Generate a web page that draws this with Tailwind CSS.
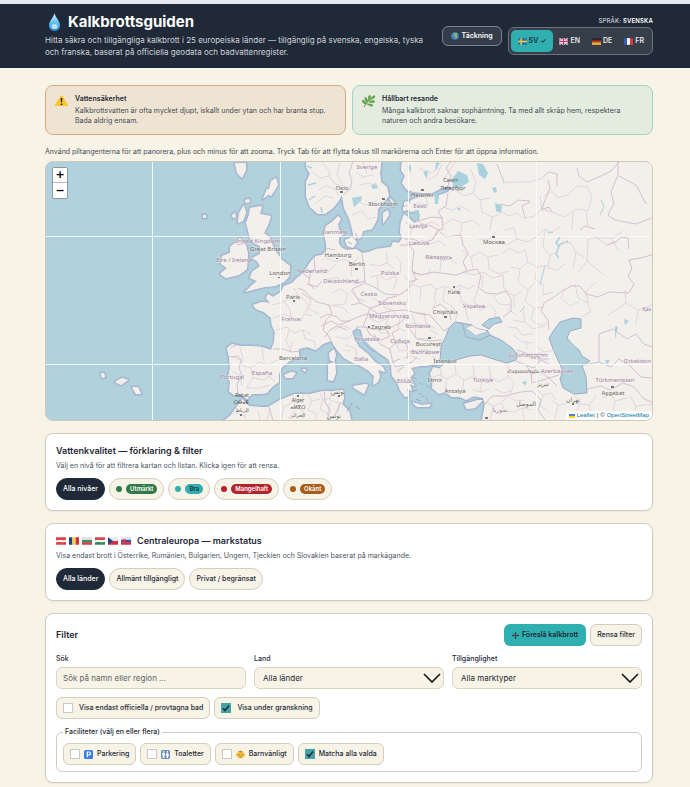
<!DOCTYPE html>
<html lang="sv">
<head>
    <meta charset="UTF-8">
    <meta name="viewport" content="width=device-width, initial-scale=1.0">
    <title>Kalkbrottsguiden</title>
    <script src="https://cdn.jsdelivr.net/npm/@tailwindcss/browser@4"></script>
</head>
<body class="bg-[#f7f3e6] font-['Inter','Noto_Sans',sans-serif] text-[7px] leading-[10px] text-[#1f2937]">

<!-- Shared icons -->
<svg class="hidden" aria-hidden="true">
    <defs>
        <clipPath id="wave"><path d="M0 1.5Q3 0 6 1T12 1V8Q9 9 6 8T0 8.5Z"/></clipPath>
        <symbol id="se" viewBox="0 0 12 9"><g clip-path="url(#wave)"><path fill="#2e73a8" d="M0 0h12v9H0z"/><path fill="#f7cf3c" d="M3.3 0h1.8v9H3.3zM0 3.6h12v1.8H0z"/></g></symbol>
        <symbol id="gb" viewBox="0 0 12 9"><g clip-path="url(#wave)"><path fill="#34488e" d="M0 0h12v9H0z"/><path stroke="#fff" stroke-width="2" d="M0 0l12 9M12 0L0 9"/><path stroke="#d8304a" stroke-width=".8" d="M0 0l12 9M12 0L0 9"/><path fill="#fff" d="M4.5 0h3v9h-3zM0 3h12v3H0z"/><path fill="#d8304a" d="M5.2 0h1.6v9H5.2zM0 3.7h12v1.6H0z"/></g></symbol>
        <symbol id="de" viewBox="0 0 12 9"><g clip-path="url(#wave)"><path fill="#27272a" d="M0 0h12v3.5H0z"/><path fill="#d5302c" d="M0 3.3h12v2.6H0z"/><path fill="#f5b52c" d="M0 5.8h12V9H0z"/></g></symbol>
        <symbol id="fr" viewBox="0 0 12 9"><g clip-path="url(#wave)"><path fill="#2f5fae" d="M0 0h4v9H0z"/><path fill="#f5f5f5" d="M4 0h4v9H4z"/><path fill="#d93640" d="M8 0h4v9H8z"/></g></symbol>
        <symbol id="at" viewBox="0 0 12 9"><g clip-path="url(#wave)"><path fill="#dc4048" d="M0 0h12v9H0z"/><path fill="#fff" d="M0 3.8Q3 2.800 6 3.400T12 3v2.500Q9 6.300 6 5.700T0 6.200z"/></g></symbol>
        <symbol id="ro" viewBox="0 0 12 9"><g clip-path="url(#wave)"><path fill="#24408e" d="M0 0h4v9H0z"/><path fill="#f7cf3c" d="M4 0h4v9H4z"/><path fill="#d0303a" d="M8 0h4v9H8z"/></g></symbol>
        <symbol id="bg" viewBox="0 0 12 9"><g clip-path="url(#wave)"><path fill="#dedede" d="M0 0h12v3.5H0z"/><path fill="#3d8b67" d="M0 3.3h12v2.6H0z"/><path fill="#cc4545" d="M0 5.8h12V9H0z"/></g></symbol>
        <symbol id="hu" viewBox="0 0 12 9"><g clip-path="url(#wave)"><path fill="#d44450" d="M0 0h12v4H0z"/><path fill="#348a5c" d="M0 5h12v4H0z"/><path fill="#fff" d="M0 3.800Q3 2.800 6 3.400T12 3v2.500Q9 6.300 6 5.700T0 6.200z"/></g></symbol>
        <symbol id="cz" viewBox="0 0 12 9"><g clip-path="url(#wave)"><path fill="#e6e6ec" d="M0 0h12v4.5H0z"/><path fill="#cf3340" d="M0 4.5h12V9H0z"/><path fill="#28457f" d="M0 0l6 4.5L0 9z"/></g></symbol>
        <symbol id="sk" viewBox="0 0 12 9"><g clip-path="url(#wave)"><path fill="#e0e0ea" d="M0 0h12v3.5H0z"/><path fill="#2f4fb0" d="M0 3.1h12v2.8H0z"/><path fill="#cf3348" d="M0 5.8h12V9H0z"/><path fill="#d33852" d="M2 2.5h3.6v3L3.8 7.2 2 5.5z"/></g></symbol>
        <symbol id="chev" viewBox="0 0 18 10"><path d="M1 1l8 8 8-8" fill="none" stroke="#1b1b1b" stroke-width="1.7"/></symbol>
        <symbol id="tick" viewBox="0 0 10 10"><path d="M2 5.3l2 2.2L8 2.4" fill="none" stroke="#17303a" stroke-width="1.6"/></symbol>
    </defs>
</svg>

<header class="border-t-4 border-[#e9e7f1] bg-[#1f2937] text-white">
    <div class="flex items-start justify-between gap-3 pt-[9px] pr-[37px] pb-[10px] pl-[45px]">
        <div class="flex-1">
            <h1 class="flex items-center gap-[5px] text-[15px] leading-[18px] font-bold">
                <svg class="h-[18px] w-[18px]" viewBox="0 0 18 18" aria-hidden="true">
                    <defs><linearGradient id="dropFill" x2="0" y2="1"><stop offset="0" stop-color="#d5f1ff"/><stop offset=".6" stop-color="#5bb9f0"/><stop offset="1" stop-color="#2389dc"/></linearGradient></defs>
                    <path fill="url(#dropFill)" d="M9.500 0C9 4 4 8 4 12.500a5.500 5.500 0 0 0 11 0C15 8 10 4 9.500 0z"/>
                    <ellipse cx="9.500" cy="13.500" rx="3" ry="2.500" fill="#b5e5fd"/>
                </svg>
                Kalkbrottsguiden
            </h1>
            <p class="mt-[3px] text-[8px] leading-3 text-[#d0d4da]">Hitta säkra och tillgängliga kalkbrott i 25 europeiska länder — tillgänglig på svenska, engelska, tyska och franska, baserat på officiella geodata och badvattenregister.</p>
        </div>
        <div class="flex items-start gap-[6px] pt-1">
            <button class="mt-[9px] flex h-5 items-center gap-[2px] rounded-md border border-[#7b828c] bg-[#343d49] px-2 font-semibold">
                <svg class="h-2 w-2" viewBox="0 0 10 10" aria-hidden="true"><circle cx="5" cy="5" r="4.800" fill="#4278dc"/><path fill="#80b957" d="M3.500 1L7 .8l1.500 2L7 4l1.500 1.500L7 8.500 5.500 9 5 6 3 5zM.5 4L2 5 1.500 7z"/></svg>
                Täckning
            </button>
            <div>
                <p class="text-right text-[6px] leading-[8px] font-medium tracking-wide text-[#d0d4da]">SPRÅK: <b class="font-semibold text-white">SVENSKA</b></p>
                <div class="mt-[2px] flex h-7 items-center rounded-md border border-[#6b727c] bg-[#353e49] p-[2px] font-semibold text-[#e4e7ea]">
                    <button class="flex h-[22px] items-center gap-[2px] rounded-[5px] bg-[#2fafb0] px-[7px] text-[#17303a]"><svg class="h-[7px] w-[9px]"><use href="#se"/></svg>SV <span>✓</span></button>
                    <button class="flex h-[22px] items-center gap-[2px] px-[6px]"><svg class="h-[7px] w-[9px]"><use href="#gb"/></svg>EN</button>
                    <button class="flex h-[22px] items-center gap-[2px] px-[6px]"><svg class="h-[7px] w-[9px]"><use href="#de"/></svg>DE</button>
                    <button class="flex h-[22px] items-center gap-[2px] px-[6px]"><svg class="h-[7px] w-[9px]"><use href="#fr"/></svg>FR</button>
                </div>
            </div>
        </div>
    </div>
</header>

<main class="pt-[17px] pr-[37px] pb-1 pl-[45px]">
    <!-- Safety notices -->
    <section class="grid grid-cols-2 gap-[6px]">
        <div class="flex gap-[6px] rounded-lg border border-[#cfad88] bg-[#efe3d2] p-2">
            <svg class="h-[15px] w-[15px] shrink-0" viewBox="0 0 15 15" aria-hidden="true"><path fill="#fbc62f" stroke="#fbc62f" stroke-linejoin="round" d="M7.500 1.500l6.500 10H1z"/><path fill="#222" d="M6.600 4h1.800L8 8.500H7z"/><circle cx="7.500" cy="10.300" r=".9" fill="#222"/></svg>
            <div>
                <h2 class="font-semibold">Vattensäkerhet</h2>
                <p class="mt-[2px] text-[#434b55]">Kalkbrottsvatten är ofta mycket djupt, iskallt under ytan och har branta stup. Bada aldrig ensam.</p>
            </div>
        </div>
        <div class="flex gap-[6px] rounded-lg border border-[#a6d3c5] bg-[#e4ebdf] p-2">
            <svg class="h-[15px] w-[15px] shrink-0" viewBox="0 0 15 15" aria-hidden="true"><path d="M3 13Q6 7 12 3M5 10L2 7M7 8L5 4M8 7L8 2M6 10l5 1M8 8l5 0" fill="none" stroke="#568e3f"/><g fill="#69a650"><ellipse cx="3" cy="8" rx="1.400" ry="2.600" transform="rotate(-45 3 8)"/><ellipse cx="5" cy="5.500" rx="1.300" ry="2.600" transform="rotate(-20 5 5.500)"/><ellipse cx="8.500" cy="3.500" rx="1.300" ry="2.600" transform="rotate(10 8.500 3.500)"/><ellipse cx="12" cy="3.500" rx="1.300" ry="2.800" transform="rotate(50 12 3.500)"/><ellipse cx="11.500" cy="7.500" rx="2.700" ry="1.300"/><ellipse cx="9.500" cy="11" rx="2.700" ry="1.300" transform="rotate(15 9.500 11)"/></g></svg>
            <div>
                <h2 class="font-semibold">Hållbart resande</h2>
                <p class="mt-[2px] text-[#434b55]">Många kalkbrott saknar sophämtning. Ta med allt skräp hem, respektera naturen och andra besökare.</p>
            </div>
        </div>
    </section>

    <!-- Map -->
    <p class="mt-3 text-[#434b55]">Använd piltangenterna för att panorera, plus och minus för att zooma. Tryck Tab för att flytta fokus till markörerna och Enter för att öppna information.</p>
    <section class="relative mt-1 h-[260px] overflow-hidden rounded-lg border border-[#cdc9bb] bg-[#b1d1dd]">
        <svg class="h-full w-full" viewBox="46 162 606 258" preserveAspectRatio="xMidYMid slice" role="img" aria-label="Karta över Europa">
            <defs>
                <g id="land" stroke-linejoin="round">
                    <!-- continent -->
                    <path d="M403 155L401 170 405 176 402 183 407 190 414 192 422 193 432 193 440 189 447 186 452 187 448 192 440 195 430 196 420 197 411 200 408 206 410 212 416 211 420 214 419 221 414 223 409 218 404 214 401 222 400 232 402 238 399 243 393 242 391 247 383 248 376 249 369 252 362 253 356 249 347 250 342 248 339 244 339 237 344 234 339 230 338 224 341 219 338 216 332 222 326 226 324 234 326 243 326 251 322 255 316 256 311 261 307 267 303 273 297 278 292 283 284 286 281 292 273 297 268 294 266 298 270 303 262 302 253 305 256 309 264 312 271 318 272 326 275 332 274 342 271 350 262 347 250 346 240 346 232 344 227 348 229 357 230 368 228 378 230 382 229 391 234 395 240 394 247 399 252 394 260 394 267 393 272 387 279 382 279 374 282 367 290 361 299 357 299 349 307 347 316 350 323 344 331 341 337 350 344 358 353 363 361 366 369 371 374 376 373 385 378 382 380 376 378 370 385 372 383 367 375 362 368 354 359 347 354 338 352 331 357 328 361 330 363 338 370 346 379 353 388 359 391 366 392 376 397 382 400 390 405 397 409 396 407 389 412 391 410 384 415 386 410 378 414 373 411 368 420 366 427 366 436 363 433 368 430 374 433 380 432 388 439 394 445 392 452 397 460 397 466 400 474 396 483 398 485 404 482 421H660V155Z"/>
                    <!-- Scandinavia -->
                    <path d="M307 155L306 167 310 174 306 182 306 196 310 207 318 214 325 214 333 208 338 202 342 195 344 208 349 218 352 229 354 239 361 238 363 231 372 229 377 220 378 209 384 202 389 196 387 187 381 182 380 173 382 155Z"/>
                    <!-- British Isles -->
                    <path d="M250 208L262 206 260 214 271 216 268 225 264 233 270 238 274 249 282 260 290 266 289 277 284 282 275 286 265 287 256 289 245 292 252 285 257 281 250 278 252 272 260 266 257 261 252 258 260 254 260 246 254 243 250 239 248 230 246 223 249 215Z"/>
                    <path d="M240 238L246 245 248 254 247 269 239 275 226 278 220 274 227 268 221 264 222 256 230 253 230 247 236 242Z"/>
                    <path d="M244 205l-5 8-1 10 5-2 3-8zM271 181l5-3 2 7-7 11-3-2zM235 163l11 0 0 7-4 8-5-5zM245 200l4-1 1 3-4 1zM267 189l3 0-2 6-5 4zM232 215l3-2 1 4-3 1z"/>
                    <!-- islands -->
                    <path d="M329 353l5-4 2 6-2 7-4-2zM328 364l7-2 1 11-3 8-5-1zM353 386l13-2 2 1-4 9-10-6zM284 375l7-3 5 1-4 5-6 0zM302 369l4 0-1 3zM412 402l10 3 9-1-2 3-12 0zM464 404l14-4 5 0-8 8-8 1zM345 240l7-3 5 5-4 6-6-2zM383 213l5-3 1 5-6 9zM389 197l5 5-1 5zM404 202l5-1 0 4-5 1zM403 207l5-1 0 4-5 1z"/>
                    <!-- Africa -->
                    <path d="M218 425L230 416 238 405 242 399 249 406 260 407 268 407 280 400 295 394 310 394 323 391 333 391 343 390 344 398 342 404 349 411 352 425Z"/>
                    <path d="M101 373l3 0 1 4-3 1zM115 382l7-4 6 2-7 5zM132 387l6 0 3 7-5 0zM203 215l3 0 0 3-3 0z"/>
                </g>
                <g id="seas" stroke-linejoin="round">
                    <path d="M440 361L441 347 446 336 449 328 455 322 462 323 464 329 467 335 476 336 484 333 490 335 501 340 512 348 517 354 516 360 507 363 493 359 481 355 470 356 459 359 449 363Z"/>
                    <path d="M482 325L489 319 499 317 502 322 494 324 489 329Z"/>
                    <path d="M462 323L472 325 468 328 474 333 479 334 487 330 490 335 480 340 466 337Z"/>
                    <path d="M560 322L573 318 581 319 581 328 570 331 567 338 573 345 579 350 582 356 590 361 582 366 586 376 587 393 574 394 563 388 560 379 563 371 558 360 553 349 549 338 554 330Z"/>
                    <path d="M432 366l12-2-5 4z"/>
                </g>
                <path id="lakes" d="M452 179l6-8 9 4 2 7-8 5-8 1zM477 163l6 1 5 9-3 6-6-4zM415 210h4v8h-4zM434 192l5 3-1 9-3 0zM352 198l10-2-1 5-7 6zM371 185l5-2 2 5-5 1zM457 208l4 0-2 3zM492 188l4-1 1 5-3 1zM495 203l7 3-1 7-5-2zM624 319l5 2-4 4zM615 327l3-1-3 14zM436 162l4 1-5 8zM423 172l5-2-1 9zM407 166l4-1 0 8zM522 382l5-1-2 5zM605 360l5 0-3 5z"/>
            </defs>

            <use href="#land" fill="#f3f0ec" stroke="#9aa9cb" stroke-width="4" stroke-opacity=".35"/>
            <use href="#land" fill="#f3f0ec" stroke="#a29fc4" stroke-width="2" stroke-opacity=".4"/>
            <use href="#land" fill="#f3f0ec"/>
            <use href="#seas" fill="#b1d1dd" stroke="#9caac6" stroke-width="1"/>
            <path d="M465 328l7-3 4 3 9 2 2 2-7 2-4 2-5-4z" fill="#f3f0ec" stroke="#9caac6" stroke-width=".6"/>
            <use href="#lakes" fill="#a9d2df"/>
            <g fill="none" stroke="#a9d2df">
                <path d="M560 237l-4 6 3 3-3 8 3 4M559 245l9-4M307 166l5 2M308 185l8-2M309 200l6-4M322 213l-1-6" stroke-width="1.500"/>
                <path d="M601 200l3 7-4 8M547 232l6 1M545 265l-5 20M525 306l-5 6" stroke-width="1"/>
                <path d="M417 370l3 6 5 2-2 8 5 6-3 7M355 332l7 8 10 10" stroke-width="2"/>
            </g>
            <path d="M413 377l4 2M419 382l3 3M413 391l5-1M419 393l5 4M426 385l4 3M416 399l5 2M425 397l4 4M356 233l1 7M348 242l4 2M363 342l11 10M347 412l5-9M355 406l5 3" stroke="#929dbe" stroke-opacity=".7"/>

            <!-- region borders -->
            <g fill="none" stroke="#e0d5df" stroke-width="1" stroke-linejoin="round">
                <path d="M312 172l8 6 9-2 6 8 8 2M319 190l6-4 10 3 4 7M316 203l9-7 9 2M322 162l7 9 1 7M340 163l-3 12 5 8M356 172l7 5 10-2M359 185l10-2 8 3M356 200l9 5 12-4M352 215l10-4 6 8 8-2M363 162l4 12"/>
                <path d="M283 300l7 9 1 9 10 3 3-7 8 2M273 318l12-4 8 5M276 330l11-3 7 6 9-3 8 4M289 330l-3 11 4 8M303 330l2 9 9 2 2 8M272 305l11-3 10-7 9 3 6 7-2 8M294 288l5 9M311 299l-2 10 10 5M290 352l2-10"/>
                <path d="M240 348l3 11-2 6 10 3 8-6 9 3 9-5M251 368l2 10 11 2 9-6M232 357l9 3M232 372l8 3 2 11M253 378l-7 10M262 348l2 13M268 376l7 5M246 388l14 0 10-3"/>
                <path d="M326 258l10 4 8-3 9 5 5-7M327 280l9-3 8 5 9-2 8 4M331 293l10-4 7 5-3 10-12 1M350 290l7 8 9 3M320 268l9 3 7-7M352 264l-1 12M327 305l14 2 8 6M335 330l8-5 7 4M337 337l10 2 5-4M345 345l10 3 2 9M355 358l10-1M343 350l8 1"/>
                <path d="M369 264l10 2 8-3 7 5M370 277l9-2 7 5 8-3M386 252l2 12M392 270l5 10-4 10M377 277l1 12M395 255l6 8-1 11M404 275l6 8-3 9M356 297l7 5M372 298l8 4 7-2M383 307l10 3 4 6M369 318l9 4 8-3M389 313l-3 12M375 328l6 5 8 0M400 318l-2 10 7 3M405 325l10-2 7 5 8-3M412 314l4 12-1 12M424 312l2 12 9 4M430 330l8 4M418 338l9 1 9-2M396 342l3 9 9-1M403 358l9-2 9 4M396 370l9-3M402 380l7-2"/>
                <path d="M413 285l8 2 9-3 6 5-2 12M421 287l-1 14M436 289l9-3 8 4 6-5 9 4 7-4M445 286l-2 15 9 5M459 285l2 16 9 5M478 288l-4 13 6 9M451 306l7 7-3 8M465 306l3 14M480 310l9-4M436 301l-4 9M490 304l6 8-2 6"/>
                <path d="M421 240l9 4 9-3 7 5M423 258l8-3 10 6-1 10M441 261l10-2 6 5M431 268l-3 7M416 220l8 5 8-3 7 4M417 203l10 2M426 197l2 10M405 222l7 5-2 8M443 207l9 3 9-4 10 6M443 225l10-6 9 4 11-3 7 6M462 223l-2 15M455 190l9 6 9-3 7 7 10-2M471 170l5 12-3 11M480 200l2 12 10 5 8-3M492 217l-2 13M419 168l11 5 9-5M428 180l9-5 5-11M443 180l8-12 5-7"/>
                <path d="M462 250l9 7 9-5 8 5 10-2M471 257l2 11M488 257l1 12 10 5 10-3M462 272l12 3 9-3 10 6 10-3M483 275l-1 12M503 275l1 14 10 7 8-5M493 295l6 9 11 1M514 296l0 11M478 240l12-1 7-8M505 230l9-2 3 11-10 6-6-3M517 239l11 3 9-6M501 254l9-6 8 5 7-3M525 250l3 12-8 7-10-2M502 212l6 4 9-3 6 5"/>
                <path d="M525 218l10-2 7-7 9 3M542 209l-2-13M552 212l12 5 7-5 6-3 9 1 2 16M573 212l-1 18M535 238l10-9 7 3 8-5M545 229l-2 18 7 8 9-3M550 255l-2 13 9 2 8-6M528 262l9 5 11-1M537 267l-2 12 9 7M520 269l-2 13 10 8 7-8M544 286l-1 9 10-3M528 290l-3 11 9 7 11-1M534 308l-3 12 9 5 9-2M513 320l12 2 8 7 12-3M525 322l-2-14M507 308l9 7"/>
                <path d="M502 183l12-1 15 0 14-4M586 185l6 11-4 15M562 242l9 1 5 9 8 5M576 252l-3 17M587 240l9-3 11 8 9-4M588 240l-1 21 17 14M587 261l-9 12M543 197l9-6 6 7 10-3 8-9 9 1M594 238l19 0 10-7M618 250l-7-12M565 289l-4 9 9 8 9-4M575 284l3 14 10 5 3 9-11 5M588 303l-2-12 10-9M625 290l1 13 12 7 14-5M638 310l-2 14M626 303l-19 13"/>
                <path d="M507 327l10 1 5 7 11-1M513 335l9 7 11 1M526 340l1 9M535 345l9 7 12-2M540 352l-2 12M430 378l10-3 7 4 9-5M440 368l2 10M447 379l-2 11M456 374l-1-10M456 374l8 6-2 12M464 380l10-4 8 5M474 376l-1-12M482 381l-2 11M473 390l8 2 8-3M482 381l9-3 8 4M491 378l-2-12M499 382l9-5 6 5M508 377l0-12M514 382l-3 11M495 389l8 4 8-2"/>
                <path d="M486 402l7 4 8-3 4 8 10 1M493 406l-3 14M501 403l7-7 8 5 9-1M515 412l7-4 10 2M522 408l2 12M537 390l6 5 8-2 5 7M543 395l-3 11 8 5M551 400l7 5 8-1M558 405l-3 14M575 396l5 8 9 1 4 14M580 404l-7 13M589 405l7-9M610 392l5 9 12-3M615 401l-3 17M630 396l6 10 16-2M636 406l-3 13M602 398l9-4"/>
                <path d="M258 410l2 10M270 408l-3 12M280 402l4 5 7-4M284 407l-3 12M293 396l2 11 8 4M303 395l-1 9M307 393l5 8 8-2M312 401l-4 9 9 4M320 393l3 7 8-2M323 400l-3 9 9 6M331 391l-1 9 9 3M330 403l-3 13M339 403l-1 12M295 410l-7 9M303 411l0 8M317 414l-2 6M235 413l9 3 5-6M244 416l3 5"/>
            </g>
            <!-- national borders -->
            <g fill="none" stroke="#d0c0d1" stroke-width="1" stroke-linejoin="round">
                <path d="M343 195l7-6 2-8-3-8 4-12M448 186l3-10-5-8 7-9M448 193l-2 13-8 5M411 229l11-5 9 2 7 4-6 10-10 3-9-4-9 0M419 221l12-4 12 1M438 211l4 7 1 11-5 1M438 230l8 7 15-2 2 10 5 8-5 9 4 9-11 4-8-1-14-2-14 3-8-4 1-12 1-8-7-8"/>
                <path d="M432 240l6-8M400 245l12 0 8-3M362 254l2 13 1 16 11 5 9 6 14 1 9-6 8-10-4-8M354 284l11-3M365 283l-13 6 8 14 10 5 10-3 8-7 9-2M370 308l8 6 12-3 15-1 12 3 9 2M351 305l9-2M347 330l-10-4-7 4-5 7M333 344l-5-9-5-5 3-10 6-6-3-9-12-3-7-5-5-6-7-3M310 299l-8-6M314 258l1 10-5 6-1 9 5 6M303 273l6 5M307 284l10 3 5-6M320 318l8-4 9 3 4 4 9 0M321 326l10-5 8 4 10-4 9-4 9-3 10 1"/>
                <path d="M370 308l-3 9-4 9 8 3 11 1 10-3 8-4 9-9M356 327l10 0 4 8 12 5 8-4-5-9M374 334l6 10 9 5 7-6-4-10 7-4M390 349l2 10 3 8 10-2 7-3 5-5M396 343l10 0 3 9 16-2 12 3 6-4M405 325l7 7 5 7 14 2 11-1M417 313l13 2 7 8 7 8 5-3M433 308l7-4 9 7 2 9M408 352l-1 7M392 362l8-3M397 373l6-6M409 290l-1 12M437 364l-4-8M409 282l9-3M413 273l7 1M467 271l10-2 4 7-3 11 8 6 11 1 9-3 5 8 0 12-8 6"/>
                <path d="M236 345l-6 3M228 357l10-1 3 4-2 8 3 8-5 8 1 10M273 349l11 0 8 3 8-1M324 389l1 13 5 8-3 11M341 402l-8 17M269 407l4 13M233 238l5 7 7-2M335 250l-9-2M485 404l7-8 12 0 17-4 11-1M516 361l10 4 5 8 1 10M531 374l10-2 8 6 10-3M525 365l9 3 7-8 8 4M517 350l9 3 11 6 12 0M532 391l9 9-3 10 8 11M557 386l-8-8-17 5"/>
                <path d="M549 330l-1-10-7-9 3-8 10-6 8-6 9-5 9 0 6 8 12 3 11-5 20 1 5-9-6-8 4-7-3-9 12-2 17-5M497 164l7 18M542 209l3-9 5-12-2-8M557 186l0-12-8-2-6 5M577 168l2 8 8 6 14-6 10-5 8-9M618 162l0 13-7 17 3 11-6 12 7 5 21 4 16-6M619 176l17 9 10 19M552 212l-3-5-8 3M580 230l5-4 10 3M607 245l9-3 5-5 7 1 1 11M599 362v-28l14-5 14 10 9-5 8 10 8 3M585 365l14-3 12 5 8-8 10 6 12 12 11 1M587 389l14-3 9 4 13-7 11 4 10 12 8 3M525 218l-3-12 8-4M499 204l11 2 8-6 12 1"/>
            </g>
            <!-- tile seams -->
            <path d="M152.500 161v260M280.500 161v260M408.500 161v260M45 236.500h380M45 364.500h608" stroke="#fff" stroke-opacity=".85"/>
            <path d="M536.500 161v260M425 236.500h228" stroke="#fff" stroke-opacity=".6"/>

            <!-- countries -->
            <g class="font-['Noto_Sans','DejaVu_Sans',sans-serif] text-[6px]" text-anchor="middle" fill="#9a83a6" stroke="#f3f0ec" stroke-opacity=".6" paint-order="stroke">
                <text x="367" y="169">Sverige</text>
                <text x="335" y="234">Danmark</text>
                <text x="257" y="243">United Kingdom</text>
                <text x="234" y="262">Éire / Ireland</text>
                <text x="312" y="273">Nederland</text>
                <text x="341" y="283">Deutschland</text>
                <text x="291" y="321">France</text>
                <text x="262" y="375">España</text>
                <text x="232" y="379">Portugal</text>
                <text x="420" y="208">Eesti</text>
                <text x="418" y="228">Latvija</text>
                <text x="419" y="245">Lietuva</text>
                <text x="439" y="259">Беларусь</text>
                <text x="390" y="275">Polska</text>
                <text x="369" y="296">Česko</text>
                <text x="392" y="305">Slovensko</text>
                <text x="389" y="318">Magyarország</text>
                <text x="418" y="328">România</text>
                <text x="367" y="341">Hrvatska</text>
                <text x="400" y="343">Србија</text>
                <text x="361" y="361">Italia</text>
                <text x="425" y="354">България</text>
                <text x="405" y="383">Ελλάς</text>
                <text x="474" y="308">Україна</text>
                <text x="483" y="382">Türkiye</text>
                <text x="528" y="357">საქართველო</text>
                <text x="557" y="373">Azərbaycan</text>
                <text x="615" y="382">Türkmenistan</text>
                <text x="500" y="412">سوريا</text>
            </g>
            <g class="font-['Noto_Sans','DejaVu_Sans',sans-serif] text-[5px]" text-anchor="end" fill="#9a83a6">
                <text x="651" y="363">Oʻzbekiston</text>
                <text x="651" y="311">Қаз</text>
            </g>
            <!-- cities -->
            <g class="font-['Noto_Sans','DejaVu_Sans',sans-serif] text-[6px]" text-anchor="middle" fill="#666" stroke="#f3f0ec" stroke-opacity=".6" paint-order="stroke">
                <text x="342" y="190">Oslo</text>
                <text x="383" y="206">Stockholm</text>
                <text x="422" y="197">Helsinki</text>
                <text x="494" y="244">Москва</text>
                <text x="268" y="251">Great Britain</text>
                <text x="280" y="275">London</text>
                <text x="338" y="257">Hamburg</text>
                <text x="357" y="266">Berlin</text>
                <text x="293" y="299">Paris</text>
                <text x="454" y="294">Київ</text>
                <text x="445" y="314">Chișinău</text>
                <text x="381" y="329">Zagreb</text>
                <text x="429" y="346">București</text>
                <text x="293" y="360">Barcelona</text>
                <text x="445" y="363">İstanbul</text>
                <text x="435" y="382">İzmir</text>
                <text x="455" y="393">Antalya</text>
                <text x="543" y="386">تبریز</text>
                <text x="526" y="406">الموصل</text>
                <text x="573" y="402">تهران</text>
                <text x="613" y="395">Aşgabat</text>
                <text x="338" y="394">تونس</text>
                <text x="334" y="418">تونس</text>
            </g>
            <g class="font-['Noto_Sans','DejaVu_Sans',sans-serif] text-[5px]" text-anchor="middle" fill="#555">
                <text x="451" y="182">Санкт-</text>
                <text x="453" y="190">Петербург</text>
                <text x="523" y="373">Հայաստան</text>
                <text x="242" y="397">Rabat</text>
                <text x="241" y="404">ⵔⴱⴰⵟ</text>
                <text x="242" y="412">الرباط</text>
                <text x="298" y="402">Alger</text>
                <text x="298" y="409">ⴰⵍⴳⵔ</text>
                <text x="298" y="417">الجزائر</text>
            </g>
            <path d="M340 191h3v2h-3zM382 198h3v2h-3zM421 189h3v2h-3zM492 236h3v2h-3zM278 277h2v1h-2zM336 258h2v1h-2zM355 268h3v2h-3zM293 300h2v2h-2zM453 286h2v2h-2zM444 316h3v2h-3zM368 326h2v2h-2zM428 337h3v2h-3zM572 403h2v2h-2zM611 386h3v2h-3zM240 414h2v2h-2zM297 395h2v2h-2zM338 395h2v2h-2zM485 417h3v2h-3z" fill="#777"/>
        </svg>
        <div class="absolute top-[5px] left-[6px] flex w-4 flex-col rounded-xs border border-[#8c9ba2] bg-white font-['DejaVu_Sans','Noto_Sans',sans-serif] text-[11px] leading-[14px] font-bold text-black">
            <button class="h-[15px] border-b border-[#bbb]" aria-label="Zooma in">+</button>
            <button class="h-[15px]" aria-label="Zooma ut">−</button>
        </div>
        <p class="absolute right-0 bottom-0 flex items-center gap-[2px] bg-white/80 px-[3px] font-['Liberation_Sans',Arial,sans-serif] text-[6px] leading-[9px] text-[#333]">
            <a href="#" class="flex items-center gap-[2px] text-[#0078a8]"><svg class="h-1 w-[6px]" viewBox="0 0 6 4" aria-hidden="true"><path fill="#4c7be1" d="M0 0h6v2H0z"/><path fill="#ffd500" d="M0 2h6v2H0z"/></svg>Leaflet</a>
            <span>|</span><span>©</span>
            <a href="#" class="text-[#0078a8]">OpenStreetMap</a>
        </p>
    </section>

    <!-- Water quality -->
    <section class="mt-3 rounded-lg border border-[#d1ccbd] bg-white px-[10px] pt-[11px] pb-[10px] shadow-xs">
        <h2 class="text-[9px] leading-3 font-semibold">Vattenkvalitet — förklaring &amp; filter</h2>
        <p class="mt-1 text-[#4b5563]">Välj en nivå för att filtrera kartan och listan. Klicka igen för att rensa.</p>
        <div class="mt-[7px] flex flex-wrap gap-1">
            <button class="h-[22px] rounded-full border border-[#1f2937] bg-[#1f2937] px-[6px] font-medium text-white">Alla nivåer</button>
            <button class="flex h-[22px] items-center gap-1 rounded-full border border-[#d3cebf] bg-[#f7f3e6] px-[6px]"><span class="h-[6px] w-[6px] rounded-full bg-[#2f7a47]"></span><span class="rounded-full bg-[#2f7a47] px-1 text-[6px] font-semibold text-white">Utmärkt</span></button>
            <button class="flex h-[22px] items-center gap-1 rounded-full border border-[#d3cebf] bg-[#f7f3e6] px-[6px]"><span class="h-[6px] w-[6px] rounded-full bg-[#2fafb0]"></span><span class="rounded-full bg-[#2fafb0] px-1 text-[6px] font-semibold text-[#1f2937]">Bra</span></button>
            <button class="flex h-[22px] items-center gap-1 rounded-full border border-[#d3cebf] bg-[#f7f3e6] px-[6px]"><span class="h-[6px] w-[6px] rounded-full bg-[#b4232c]"></span><span class="rounded-full bg-[#b4232c] px-1 text-[6px] font-semibold text-white">Mangelhaft</span></button>
            <button class="flex h-[22px] items-center gap-1 rounded-full border border-[#d3cebf] bg-[#f7f3e6] px-[6px]"><span class="h-[6px] w-[6px] rounded-full bg-[#a85d1b]"></span><span class="rounded-full bg-[#a85d1b] px-1 text-[6px] font-semibold text-white">Okänt</span></button>
        </div>
    </section>

    <!-- Central Europe -->
    <section class="mt-3 rounded-lg border border-[#d1ccbd] bg-white px-[10px] pt-[11px] pb-[10px] shadow-xs">
        <h2 class="flex items-center gap-[6px] text-[9px] leading-3 font-semibold">
            <span class="flex gap-[3px]">
                <svg class="h-2 w-[10px]"><use href="#at"/></svg>
                <svg class="h-2 w-[10px]"><use href="#ro"/></svg>
                <svg class="h-2 w-[10px]"><use href="#bg"/></svg>
                <svg class="h-2 w-[10px]"><use href="#hu"/></svg>
                <svg class="h-2 w-[10px]"><use href="#cz"/></svg>
                <svg class="h-2 w-[10px]"><use href="#sk"/></svg>
            </span>
            Centraleuropa — markstatus
        </h2>
        <p class="mt-1 text-[#4b5563]">Visa endast brott i Österrike, Rumänien, Bulgarien, Ungern, Tjeckien och Slovakien baserat på markägande.</p>
        <div class="mt-[7px] flex flex-wrap gap-1">
            <button class="h-[22px] rounded-full border border-[#1f2937] bg-[#1f2937] px-[6px] font-medium text-white">Alla länder</button>
            <button class="h-[22px] rounded-full border border-[#d3cebf] bg-[#f7f3e6] px-[6px] font-medium">Allmänt tillgängligt</button>
            <button class="h-[22px] rounded-full border border-[#d3cebf] bg-[#f7f3e6] px-[6px] font-medium">Privat / begränsat</button>
        </div>
    </section>

    <!-- Filter -->
    <section class="mt-3 rounded-lg border border-[#d1ccbd] bg-white p-[10px] shadow-xs">
        <div class="flex items-center justify-between">
            <h2 class="text-[9px] leading-3 font-semibold">Filter</h2>
            <div class="flex gap-1">
                <button class="flex h-[22px] items-center gap-[3px] rounded-md bg-[#2fafb0] px-2 font-semibold"><svg class="h-[7px] w-[7px]" viewBox="0 0 7 7" aria-hidden="true"><path d="M3.500 0v7M0 3.500h7" stroke="#3d4750" stroke-width="1.300"/></svg>Föreslå kalkbrott</button>
                <button class="h-[22px] rounded-md border border-[#d3cebf] bg-[#f7f3e6] px-[6px] font-medium">Rensa filter</button>
            </div>
        </div>
        <div class="mt-2 grid grid-cols-3 gap-2">
            <div>
                <label for="search" class="block font-medium">Sök</label>
                <input id="search" type="text" placeholder="Sök på namn eller region …" class="mt-[3px] block h-[22px] w-full rounded-md border border-[#d9d4c5] bg-[#f7f3e6] px-[6px] text-[8px] placeholder:text-[#626669]">
            </div>
            <div>
                <label for="country" class="block font-medium">Land</label>
                <div class="relative mt-[3px]">
                    <select id="country" class="block h-[22px] w-full appearance-none rounded-md border border-[#d9d4c5] bg-[#f7f3e6] px-2 text-[8px]"><option>Alla länder</option></select>
                    <svg class="pointer-events-none absolute top-[6px] right-[3px] h-[10px] w-[18px]"><use href="#chev"/></svg>
                </div>
            </div>
            <div>
                <label for="access" class="block font-medium">Tillgänglighet</label>
                <div class="relative mt-[3px]">
                    <select id="access" class="block h-[22px] w-full appearance-none rounded-md border border-[#d9d4c5] bg-[#f7f3e6] px-2 text-[8px]"><option>Alla marktyper</option></select>
                    <svg class="pointer-events-none absolute top-[6px] right-[3px] h-[10px] w-[18px]"><use href="#chev"/></svg>
                </div>
            </div>
        </div>
        <div class="mt-2 flex flex-wrap gap-1">
            <label class="flex h-[22px] items-center gap-[6px] rounded-md border border-[#d3cebf] bg-[#f7f3e6] px-[6px] font-medium">
                <input type="checkbox" class="h-[10px] w-[10px] appearance-none border border-[#c9c8c4] bg-white">
                Visa endast officiella / provtagna bad
            </label>
            <label class="flex h-[22px] items-center gap-[6px] rounded-md border border-[#d3cebf] bg-[#f7f3e6] px-[6px] font-medium">
                <span class="grid"><input type="checkbox" checked class="col-start-1 row-start-1 h-[10px] w-[10px] appearance-none bg-[#45a3a6]"><svg class="pointer-events-none col-start-1 row-start-1 h-[10px] w-[10px]"><use href="#tick"/></svg></span>
                Visa under granskning
            </label>
        </div>
        <fieldset class="mt-2 rounded-md border border-[#d1ccc2] px-[6px] pb-[6px]">
            <legend class="px-[2px] font-medium">Faciliteter (välj en eller flera)</legend>
            <div class="flex flex-wrap gap-1 pt-[6px]">
                <label class="flex h-[22px] items-center gap-1 rounded-md border border-[#d3cebf] bg-[#f7f3e6] px-[6px] font-medium">
                    <input type="checkbox" class="h-[10px] w-[10px] appearance-none border border-[#c9c8c4] bg-white">
                    <svg class="h-[9px] w-[9px]" viewBox="0 0 9 9" aria-hidden="true"><rect width="9" height="9" rx="1.500" fill="#377fe0"/><path d="M3.300 7.300V2h1.700a1.400 1.400 0 0 1 0 3H3.300" fill="none" stroke="#fff" stroke-width="1.200"/></svg>
                    Parkering
                </label>
                <label class="flex h-[22px] items-center gap-1 rounded-md border border-[#d3cebf] bg-[#f7f3e6] px-[6px] font-medium">
                    <input type="checkbox" class="h-[10px] w-[10px] appearance-none border border-[#c9c8c4] bg-white">
                    <svg class="h-[9px] w-[9px]" viewBox="0 0 9 9" aria-hidden="true"><rect width="9" height="9" rx="1.500" fill="#6f91b4"/><g fill="#fff"><circle cx="2.600" cy="1.900" r=".8"/><circle cx="6.400" cy="1.900" r=".8"/><path d="M1.300 3h2.600v2.400h-.5V8H1.800V5.400h-.5zM5.700 3h1.400l1 2.800h-.9V8H5.600V5.800h-.9z"/></g></svg>
                    Toaletter
                </label>
                <label class="flex h-[22px] items-center gap-1 rounded-md border border-[#d3cebf] bg-[#f7f3e6] px-[6px] font-medium">
                    <input type="checkbox" class="h-[10px] w-[10px] appearance-none border border-[#c9c8c4] bg-white">
                    <svg class="h-[9px] w-[9px]" viewBox="0 0 9 9" aria-hidden="true"><circle cx="4.500" cy="4.800" r="3.800" fill="#f8c342"/><circle cx="1" cy="5" r="1" fill="#e9a936"/><circle cx="8" cy="5" r="1" fill="#e9a936"/><path d="M2.500 1.800Q4.500.3 6.500 1.800M4.500 1q1.200 1-.2 1.600" fill="none" stroke="#a9762c" stroke-width=".7"/><circle cx="3.200" cy="4.600" r=".5" fill="#5a4020"/><circle cx="5.800" cy="4.600" r=".5" fill="#5a4020"/><path d="M3.400 6.300q1.100 1 2.200 0" fill="none" stroke="#8a4c20" stroke-width=".7"/></svg>
                    Barnvänligt
                </label>
                <label class="flex h-[22px] items-center gap-1 rounded-md border border-[#d3cebf] bg-[#f7f3e6] px-[6px] font-medium">
                    <span class="grid"><input type="checkbox" checked class="col-start-1 row-start-1 h-[10px] w-[10px] appearance-none bg-[#45a3a6]"><svg class="pointer-events-none col-start-1 row-start-1 h-[10px] w-[10px]"><use href="#tick"/></svg></span>
                    Matcha alla valda
                </label>
            </div>
        </fieldset>
    </section>
</main>

</body>
</html>
